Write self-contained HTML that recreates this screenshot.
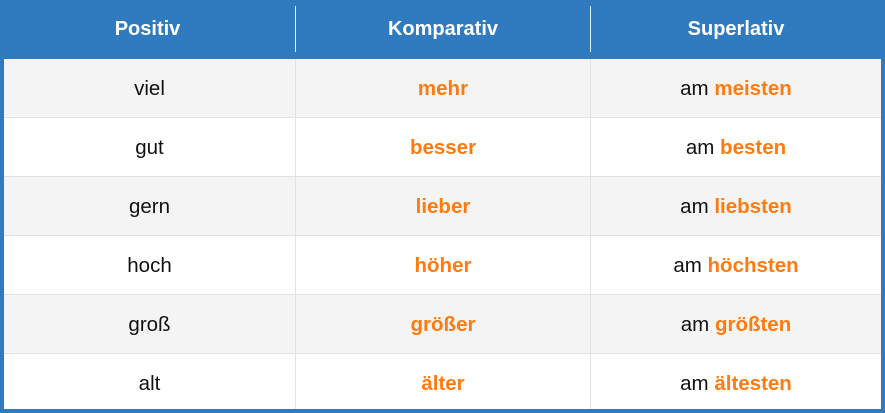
<!DOCTYPE html>
<html><head><style>
body{margin:0;width:885px;height:413px;background:#307bbf;font-family:"Liberation Sans",sans-serif;overflow:hidden;position:relative}
.hd{position:absolute;top:0;height:59px;line-height:59px;color:#fff;font-weight:bold;font-size:20px;text-align:center}
.vl{position:absolute;top:6px;height:46px;width:1px;background:#e6eef7}
.tb{position:absolute;left:4px;top:59px;width:877px;height:350px;background:#fff}
.r{position:absolute;left:0;width:877px;height:58px;border-bottom:1px solid #e2e2e2}
.r.g{background:#f4f4f4}
.c{position:absolute;top:1px;height:58px;line-height:58px;text-align:center;font-size:20.5px;color:#111}
.c1{left:0;width:291px}.c2{left:292px;width:294px}.c3{left:587px;width:290px}
.o{color:#ff7b0f;font-weight:bold}
.cl{position:absolute;top:0;width:1px;height:350px;background:#e2e2e2}
</style></head><body>
<div class="hd" style="left:0;width:295px">Positiv</div>
<div class="hd" style="left:296px;width:294px">Komparativ</div>
<div class="hd" style="left:591px;width:290px">Superlativ</div>
<div class="vl" style="left:295px"></div><div class="vl" style="left:590px"></div>
<div class="tb">
<div class="r g" style="top:0"><div class="c c1">viel</div><div class="c c2 o">mehr</div><div class="c c3">am <span class="o">meisten</span></div></div>
<div class="r" style="top:59px"><div class="c c1">gut</div><div class="c c2 o">besser</div><div class="c c3">am <span class="o">besten</span></div></div>
<div class="r g" style="top:118px"><div class="c c1">gern</div><div class="c c2 o">lieber</div><div class="c c3">am <span class="o">liebsten</span></div></div>
<div class="r" style="top:177px"><div class="c c1">hoch</div><div class="c c2 o">höher</div><div class="c c3">am <span class="o">höchsten</span></div></div>
<div class="r g" style="top:236px"><div class="c c1">groß</div><div class="c c2 o">größer</div><div class="c c3">am <span class="o">größten</span></div></div>
<div class="r" style="top:295px;border:none;height:55px"><div class="c c1">alt</div><div class="c c2 o">älter</div><div class="c c3">am <span class="o">ältesten</span></div></div>
<div class="cl" style="left:291px"></div><div class="cl" style="left:586px"></div>
</div>
</body></html>
